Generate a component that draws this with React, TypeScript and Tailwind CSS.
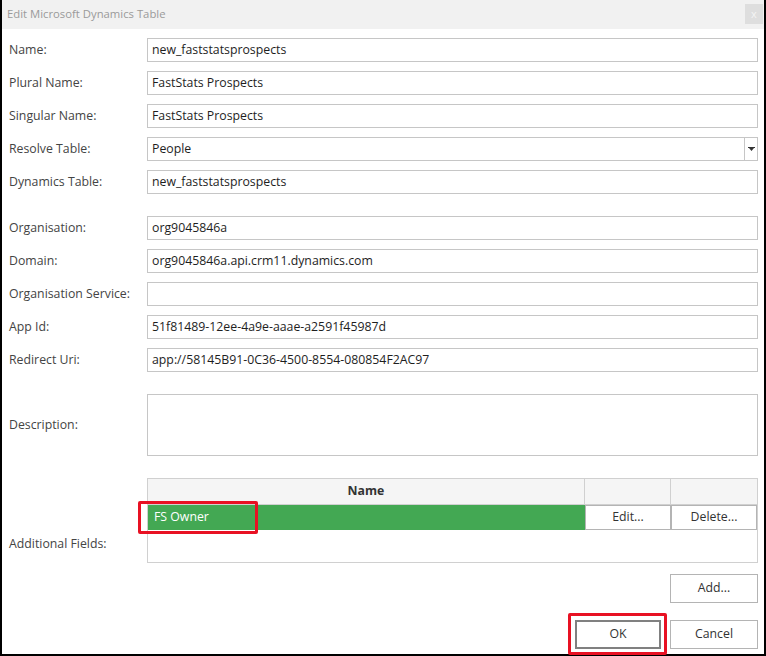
import React from 'react';

const font = { fontFamily: '"Open Sans", "Noto Sans", sans-serif' };

type Field = { label: string; value: string };

const topFields: Field[] = [
  { label: 'Name:', value: 'new_faststatsprospects' },
  { label: 'Plural Name:', value: 'FastStats Prospects' },
  { label: 'Singular Name:', value: 'FastStats Prospects' },
];

const connFields: Field[] = [
  { label: 'Organisation:', value: 'org9045846a' },
  { label: 'Domain:', value: 'org9045846a.api.crm11.dynamics.com' },
  { label: 'Organisation Service:', value: '' },
  { label: 'App Id:', value: '51f81489-12ee-4a9e-aaae-a2591f45987d' },
  { label: 'Redirect Uri:', value: 'app://58145B91-0C36-4500-8554-080854F2AC97' },
];

const Label: React.FC<{ text: string }> = ({ text }) => (
  <div className="w-[145px] shrink-0 pl-[7px] text-[12.3px] text-[#444]">{text}</div>
);

const TextRow: React.FC<Field> = ({ label, value }) => (
  <div className="flex items-center h-[24px]">
    <Label text={label} />
    <div className="flex-1 h-[24px] border border-[#c6c6c6] bg-white flex items-center px-[4px] text-[12.3px] text-[#1e1e1e]">
      {value}
    </div>
  </div>
);

const GridButton: React.FC<{ text: string }> = ({ text }) => (
  <div className="h-full border border-[#b4b4b4] bg-white flex items-center justify-center text-[12.3px] text-[#333]">
    {text}
  </div>
);

export default function App() {
  return (
    <div className="w-[766px] h-[656px] bg-white border-l-2 border-r-2 border-b-2 border-black flex flex-col" style={font}>
      {/* title bar */}
      <div className="h-[29px] shrink-0 bg-[#f1f1f1] flex items-center justify-between pl-[5px] pr-[1px]">
        <span className="text-[11.3px] text-[#9a9a9a]">Edit Microsoft Dynamics Table</span>
        <div className="w-[18px] h-[20px] bg-[#dedede] flex items-center justify-center text-[11px] text-[#f4f4f4] mb-[1px]">x</div>
      </div>

      <div className="flex flex-col pr-[6px] pt-[9px]">
        <div className="flex flex-col gap-[9px]">
          {topFields.map((f) => (
            <TextRow key={f.label} {...f} />
          ))}
          <div className="flex items-center h-[24px]">
            <Label text="Resolve Table:" />
            <div className="flex-1 h-[24px] border border-[#c6c6c6] bg-white flex items-center text-[12.3px] text-[#1e1e1e]">
              <span className="flex-1 px-[4px]">People</span>
              <div className="w-[13px] h-full border-l border-[#c6c6c6] flex items-center justify-center">
                <svg width="7" height="4" viewBox="0 0 7 4">
                  <path d="M0 0h7v1H0zM1 1h5L3.5 4z" fill="#333" />
                </svg>
              </div>
            </div>
          </div>
          <TextRow label="Dynamics Table:" value="new_faststatsprospects" />
        </div>

        <div className="flex flex-col gap-[9px] mt-[22px]">
          {connFields.map((f) => (
            <TextRow key={f.label} {...f} />
          ))}
        </div>

        <div className="flex items-center mt-[22px] h-[62px]">
          <Label text="Description:" />
          <div className="flex-1 h-full border border-[#c6c6c6] bg-white" />
        </div>

        {/* additional fields */}
        <div className="flex items-center mt-[22px]">
          <div className="self-stretch flex items-center pt-[48px]">
            <Label text="Additional Fields:" />
          </div>
          <div className="flex-1 h-[85px] border border-[#d0d0d0] bg-white flex flex-col">
            <div className="h-[26px] shrink-0 bg-[#f5f5f5] border-b border-[#d0d0d0] flex">
              <div className="flex-1 flex items-center justify-center text-[12.3px] font-bold text-[#333] border-r border-[#d0d0d0]">Name</div>
              <div className="w-[86px] border-r border-[#d0d0d0]" />
              <div className="w-[86px]" />
            </div>
            <div className="h-[25px] shrink-0 flex relative">
              <div className="flex-1 bg-[#43a853] flex items-center pl-[6px] text-[12.3px] text-white">FS Owner</div>
              <div className="w-[86px]">
                <GridButton text="Edit..." />
              </div>
              <div className="w-[86px]">
                <GridButton text="Delete..." />
              </div>
              <div className="absolute left-[-10px] top-[-4px] w-[120px] h-[33px] border-[3px] border-[#e81123] rounded-[2px]" />
            </div>
          </div>
        </div>

        <div className="flex justify-end mt-[11px]">
          <div className="w-[88px] h-[29px] border border-[#b4b4b4] bg-white flex items-center justify-center text-[12.3px] text-[#333]">Add...</div>
        </div>

        <div className="flex justify-end gap-[9px] mt-[17px]">
          <div className="relative w-[86px] h-[29px] border-2 border-[#808080] bg-white flex items-center justify-center text-[12.3px] text-[#333]">
            OK
            <div className="absolute left-[-9px] top-[-9px] w-[99px] h-[42px] border-[3px] border-[#e81123] rounded-[2px]" />
          </div>
          <div className="w-[88px] h-[29px] border border-[#b4b4b4] bg-white flex items-center justify-center text-[12.3px] text-[#333]">Cancel</div>
        </div>
      </div>
    </div>
  );
}
